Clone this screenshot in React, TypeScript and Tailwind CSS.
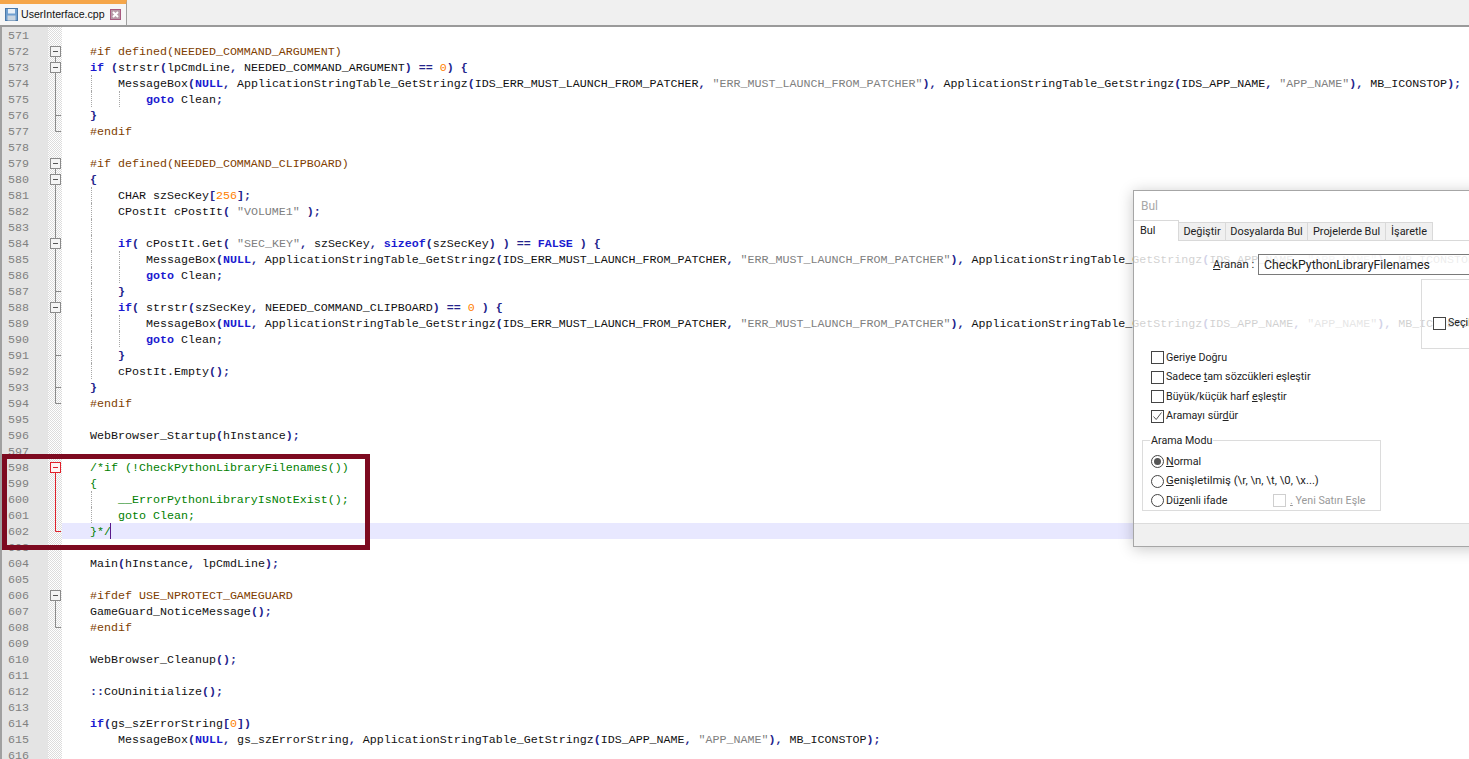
import React from "react";

const MSG = 'MessageBox(NULL, ApplicationStringTable_GetStringz(IDS_ERR_MUST_LAUNCH_FROM_PATCHER, "ERR_MUST_LAUNCH_FROM_PATCHER"), ApplicationStringTable_GetStringz(IDS_APP_NAME, "APP_NAME"), MB_ICONSTOP);';

type Fold = "" | "box" | "boxm" | "line" | "tee" | "end";
type L = [string, Fold?, number[]?];

const LINES: L[] = [
  [""],
  ['    #if defined(NEEDED_COMMAND_ARGUMENT)', "box"],
  ['    if (strstr(lpCmdLine, NEEDED_COMMAND_ARGUMENT) == 0) {', "boxm"],
  ['        ' + MSG, "line", [28]],
  ['            goto Clean;', "line", [28, 56]],
  ['    }', "tee"],
  ['    #endif', "end"],
  [""],
  ['    #if defined(NEEDED_COMMAND_CLIPBOARD)', "box"],
  ['    {', "boxm"],
  ['        CHAR szSecKey[256];', "line", [28]],
  ['        CPostIt cPostIt( "VOLUME1" );', "line", [28]],
  ['', "line", [28]],
  ['        if( cPostIt.Get( "SEC_KEY", szSecKey, sizeof(szSecKey) ) == FALSE ) {', "boxm", [28]],
  ['            ' + MSG, "line", [28, 56]],
  ['            goto Clean;', "line", [28, 56]],
  ['        }', "tee", [28]],
  ['        if( strstr(szSecKey, NEEDED_COMMAND_CLIPBOARD) == 0 ) {', "boxm", [28]],
  ['            ' + MSG, "line", [28, 56]],
  ['            goto Clean;', "line", [28, 56]],
  ['        }', "tee", [28]],
  ['        cPostIt.Empty();', "line", [28]],
  ['    }', "tee"],
  ['    #endif', "end"],
  [""],
  ['    WebBrowser_Startup(hInstance);'],
  [""],
  ['    /*if (!CheckPythonLibraryFilenames())', "box"],
  ['    {', "line"],
  ['        __ErrorPythonLibraryIsNotExist();', "line", [28]],
  ['        goto Clean;', "line", [28]],
  ['    }*/', "end"],
  [""],
  ['    Main(hInstance, lpCmdLine);'],
  [""],
  ['    #ifdef USE_NPROTECT_GAMEGUARD', "box"],
  ['    GameGuard_NoticeMessage();', "line"],
  ['    #endif', "end"],
  [""],
  ['    WebBrowser_Cleanup();'],
  [""],
  ['    ::CoUninitialize();'],
  [""],
  ['    if(gs_szErrorString[0])'],
  ['        MessageBox(NULL, gs_szErrorString, ApplicationStringTable_GetStringz(IDS_APP_NAME, "APP_NAME"), MB_ICONSTOP);'],
  [""],
];

function Code({ text, comment }: { text: string; comment: boolean }) {
  if (comment) return <span className="text-[#008000]">{text}</span>;
  if (text.trim().startsWith("#")) return <span className="text-[#804000]">{text}</span>;
  const parts = text.split(/("[^"]*"|\b\d+\b|\b(?:if|goto|sizeof|NULL|FALSE)\b|[(){}\[\],;=!:]+)/);
  return (
    <>
      {parts.map((p, i) => {
        if (!p) return null;
        if (p.startsWith('"')) return <span key={i} className="text-[#808080]">{p}</span>;
        if (/^\d+$/.test(p)) return <span key={i} className="text-[#ff8000]">{p}</span>;
        if (/^(if|goto|sizeof|NULL|FALSE)$/.test(p)) return <span key={i} className="font-bold text-[#1a1ad0]">{p}</span>;
        if (/^[(){}\[\],;=!:]+$/.test(p)) return <span key={i} className="font-bold text-[#24248c]">{p}</span>;
        return <span key={i} className="text-[#111]">{p}</span>;
      })}
    </>
  );
}

function FoldMark({ type, red }: { type: Fold; red: boolean }) {
  const c = red ? "#e0202a" : "#8a8a8a";
  return (
    <svg width="12" height="16" className="ml-[2px] block shrink-0">
      {type === "line" && <path d="M5.5 0V16" stroke={c} />}
      {type === "tee" && <path d="M5.5 0V16M5.5 8.5H11" stroke={c} />}
      {type === "end" && <path d="M5.5 0V8.5H11" stroke={c} fill="none" />}
      {(type === "box" || type === "boxm") && (
        <>
          {type === "boxm" && <path d="M5.5 0V3" stroke={c} />}
          <path d="M5.5 14V16" stroke={c} />
          <rect x="0.5" y="3.5" width="10" height="10" fill={red ? "#fff4f4" : "#f4f4f4"} stroke={c} />
          <path d="M3 8.5H8" stroke={red ? c : "#555"} />
        </>
      )}
    </svg>
  );
}

function Row({ n, line }: { n: number; line: L }) {
  const [text, fold = "", guides = []] = line;
  const comment = n >= 598 && n <= 602;
  const active = n === 602;
  return (
    <div className="flex h-4 leading-[18px]">
      <div className="w-[46px] shrink-0 bg-[#e4e4e4] pl-[6px] text-[#808080]">{n}</div>
      <div className="w-[14px] shrink-0 bg-[repeating-conic-gradient(#dcdcdc_0_25%,#ffffff_0_50%)] bg-[length:2px_2px]">
        <FoldMark type={fold} red={comment} />
      </div>
      <div className={`relative flex-1 whitespace-pre ${active ? "bg-[#e8e8ff]" : "bg-white"}`}>
        {guides.map((g) => (
          <span key={g} className="absolute top-0 bottom-0 border-l border-dotted border-[#a8a8a8]" style={{ left: g + 1 }} />
        ))}
        <Code text={text} comment={comment} />
        {active && <span className="absolute left-[48px] top-0 h-4 w-px bg-[#5b1a8a]" />}
      </div>
    </div>
  );
}

function Check({ checked, disabled }: { checked?: boolean; disabled?: boolean }) {
  return (
    <span className={`mr-[2px] flex h-[13px] w-[13px] shrink-0 items-center justify-center border ${disabled ? "border-[#cfcfcf]" : "border-[#444] bg-white"}`}>
      {checked && (
        <svg width="11" height="11" viewBox="0 0 11 11">
          <path d="M1.5 5.5L4.2 8.5L9.5 1.5" stroke="#555" fill="none" strokeWidth="1" />
        </svg>
      )}
    </span>
  );
}

function Radio({ on }: { on?: boolean }) {
  return (
    <span className="mr-[2px] flex h-[13px] w-[13px] shrink-0 items-center justify-center rounded-full border border-[#444] bg-white">
      {on && <span className="h-[7px] w-[7px] rounded-full bg-[#555]" />}
    </span>
  );
}

const U = ({ children }: { children: React.ReactNode }) => <span className="underline">{children}</span>;

function Dialog() {
  return (
    <div className="absolute left-[1133px] top-[190px] flex h-[357px] w-[420px] flex-col border border-[#a6a6a6] bg-white/80 font-['Roboto',sans-serif] text-[10.7px] leading-[14px] text-[#222] shadow-[0_2px_14px_rgba(0,0,0,0.22)]">
      <div className="h-[30px] shrink-0 pl-[7px] pt-[8px] text-[12px] text-[#a8a8a8]">Bul</div>
      <div className="flex h-[20px] shrink-0 items-end border-b border-[#d9d9d9] text-[10.9px]">
        <div className="-mb-px flex h-[21px] w-[45px] items-start border-r border-t border-[#d9d9d9] bg-white pl-[6px] pt-[3px]">Bul</div>
        <div className="flex h-[18px] w-[47px] items-center justify-center border-r border-t border-[#d9d9d9] bg-[#f0f0f0]">Değiştir</div>
        <div className="flex h-[18px] w-[82px] items-center justify-center border-r border-t border-[#d9d9d9] bg-[#f0f0f0]">Dosyalarda Bul</div>
        <div className="flex h-[18px] w-[78px] items-center justify-center border-r border-t border-[#d9d9d9] bg-[#f0f0f0]">Projelerde Bul</div>
        <div className="flex h-[18px] w-[47px] items-center justify-center border-r border-t border-[#d9d9d9] bg-[#f0f0f0]">İşaretle</div>
      </div>
      <div className="mt-[13px] flex h-[21px] shrink-0 items-center pl-[79px] text-[11.3px]">
        <span className="w-[45px] whitespace-pre"><U>A</U>ranan :</span>
        <div className="flex h-[21px] w-[280px] items-center border border-[#7a7a7a] bg-white/60 pl-[5px] text-[12.3px]">CheckPythonLibraryFilenames</div>
      </div>
      <div className="mt-[4px] flex h-[70px] shrink-0 pl-[287px]">
        <div className="flex w-[120px] items-start border border-[#dcdcdc] pl-[11px] pt-[37px]">
          <Check />
          <span className="-mt-[1px]">Seçili</span>
        </div>
      </div>
      <div className="mt-[1px] flex shrink-0 flex-col gap-[5.5px] pl-[17px] pt-[0.5px]">
        <label className="flex h-[14px] items-center"><Check /><span>Geriye Doğru</span></label>
        <label className="flex h-[14px] items-center"><Check /><span>Sadece <U>t</U>am sözcükleri eşleştir</span></label>
        <label className="flex h-[14px] items-center"><Check /><span>Büyük/küçük harf <U>e</U>şleştir</span></label>
        <label className="flex h-[14px] items-center"><Check checked /><span>Aramayı sür<U>d</U>ür</span></label>
      </div>
      <div className="relative ml-[8px] mt-[17px] flex h-[71px] w-[239px] shrink-0 flex-col gap-[5.5px] border border-[#dcdcdc] pl-[8px] pt-[13.5px]">
        <span className="absolute -top-[7px] left-[7px] bg-white px-[1px]">Arama Modu</span>
        <label className="flex h-[14px] items-center"><Radio on /><span><U>N</U>ormal</span></label>
        <label className="flex h-[14px] items-center"><Radio /><span className="text-[11.3px]"><U>G</U>enişletilmiş (\r, \n, \t, \0, \x...)</span></label>
        <label className="flex h-[14px] items-center">
          <Radio />
          <span className="w-[107px]">Dü<U>z</U>enli ifade</span>
          <span className="flex items-center text-[#999]"><Check disabled /><span className="ml-[2px] whitespace-pre"><U>.</U> Yeni Satırı Eşle</span></span>
        </label>
      </div>
      <div className="mt-auto h-[23px] shrink-0 border-t border-[#dcdcdc] bg-[#f0f0f0]" />
    </div>
  );
}

export default function App() {
  return (
    <div className="relative h-[759px] w-[1469px] overflow-hidden bg-white">
      <div className="flex h-[27px] items-start border-b-2 border-[#9a9a9a] bg-[#f0f0f0]">
        <div className="flex h-[25px] w-[127px] items-center border-r border-[#a0a0a0] border-t-[4px] border-t-[#f5a64a] bg-[#f6f6f6] pl-[5px] font-['Liberation_Sans',sans-serif] text-[10.6px] text-[#111]">
          <svg width="13" height="13" viewBox="0 0 13 13" className="mr-[3px] shrink-0">
            <rect x="0.5" y="0.5" width="12" height="12" fill="#6f9fd0" stroke="#4a78a8" />
            <rect x="3" y="1" width="7" height="4.5" fill="#e8f0f8" />
            <rect x="2.5" y="7.5" width="8" height="5" fill="#c8d4e0" />
          </svg>
          <span>UserInterface.cpp</span>
          <svg width="11" height="11" viewBox="0 0 11 11" className="ml-[5px] shrink-0">
            <rect x="0.5" y="0.5" width="10" height="10" fill="#b89aa8" stroke="#a85a80" />
            <path d="M3 3L8 8M8 3L3 8" stroke="#ffffff" strokeWidth="2" />
          </svg>
        </div>
      </div>
      <div className="border-l-2 border-[#a0a0a0] font-['Liberation_Mono',monospace] text-[11.67px]">
        {LINES.map((l, i) => (
          <Row key={i} n={571 + i} line={l} />
        ))}
      </div>
      <Dialog />
      <div className="absolute left-[2px] top-[454px] h-[96px] w-[368px] border-[5px] border-[#7d0a20]" />
    </div>
  );
}
